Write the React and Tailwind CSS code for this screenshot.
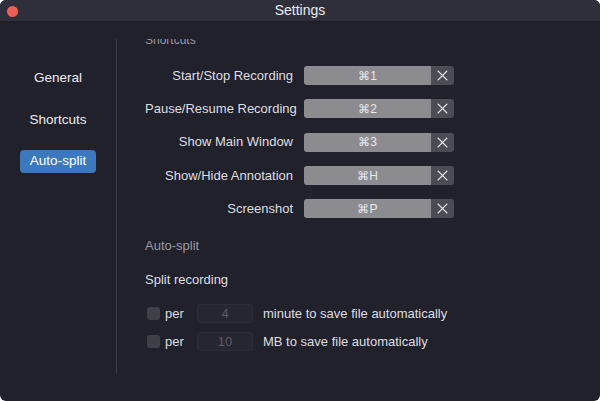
import React from 'react';

const shortcuts = [
  { label: 'Start/Stop Recording', keys: '⌘1' },
  { label: 'Pause/Resume Recording', keys: '⌘2' },
  { label: 'Show Main Window', keys: '⌘3' },
  { label: 'Show/Hide Annotation', keys: '⌘H' },
  { label: 'Screenshot', keys: '⌘P' },
];

const ShortcutRow = ({ label, keys }) => (
  <div className="flex items-center h-[33.3px]">
    <div className="w-[148px] whitespace-nowrap text-right text-[13px] text-[#dedee2]">{label}</div>
    <div className="ml-[11px] flex h-[19px]">
      <div className="w-[127px] flex items-center justify-center rounded-l-[3px] bg-[#8b8b90] text-[12px] text-[#e8e8ec]">
        {keys}
      </div>
      <button
        type="button"
        className="w-[23px] flex items-center justify-center rounded-r-[3px] bg-[#4c4c55] text-[#e8e8ec]"
      >
        <svg width="11" height="11" viewBox="0 0 10 10">
          <path d="M1 1L9 9M9 1L1 9" stroke="currentColor" strokeWidth="1.2" strokeLinecap="round" />
        </svg>
      </button>
    </div>
  </div>
);

const SplitRow = ({ value, text }) => (
  <div className="flex items-center h-[28px]">
    <div className="ml-[2px] w-[13px] h-[13px] rounded-[3px] bg-[#3f3f48]" />
    <span className="ml-[5px] w-[32px] text-[13px] text-[#dedee2]">per</span>
    <div className="w-[56px] h-[19px] flex items-center justify-center rounded-[3px] bg-[#262630] border border-[#2d2d37] text-[13px] text-[#5c5c66]">
      {value}
    </div>
    <span className="ml-[10px] whitespace-nowrap text-[13px] text-[#dedee2]">{text}</span>
  </div>
);

export default function App() {
  return (
    <div className="w-[600px] h-[401px] bg-white" style={{ fontFamily: '"Liberation Sans", Arial, sans-serif' }}>
      <div className="w-full h-full rounded-[6px] overflow-hidden bg-[#21212b] flex flex-col">
        {/* title bar */}
        <div className="relative h-[22px] bg-[#2f2f3b] border-b border-[#1c1c24] flex items-center justify-center">
          <span className="absolute left-[7px] top-[6px] w-[11px] h-[11px] rounded-full bg-[#ee5e55]" />
          <span className="text-[14px] text-[#ececf0]">Settings</span>
        </div>

        <div className="flex flex-1 pt-[17px] pb-[27px]">
          {/* sidebar */}
          <div className="w-[116px] flex flex-col items-center pt-[28px]">
            <div className="h-[22px] flex items-center text-[13.5px] text-[#ececf0]">General</div>
            <div className="mt-[20px] h-[22px] flex items-center text-[13.5px] text-[#ececf0]">Shortcuts</div>
            <div className="mt-[19px] h-[23px] px-[10px] flex items-center rounded-[4px] bg-[#3b78bd] text-[13.5px] text-white">
              Auto-split
            </div>
          </div>

          <div className="w-px bg-[#3a3a44]" />

          {/* settings pane */}
          <div className="flex-1 overflow-hidden pl-[28px]">
            <div className="-mt-[8px]">
              <div className="h-[17px] flex items-center text-[12px] text-[#9a9aa2]">Shortcuts</div>
              <div className="mt-[11px]">
                {shortcuts.map((s) => (
                  <ShortcutRow key={s.label} {...s} />
                ))}
              </div>
              <div className="mt-[12px] h-[17px] flex items-center text-[13px] text-[#9a9aa2]">Auto-split</div>
              <div className="mt-[17px] h-[17px] flex items-center text-[13px] text-[#dedee2]">Split recording</div>
              <div className="mt-[11px]">
                <SplitRow value="4" text="minute to save file automatically" />
                <SplitRow value="10" text="MB to save file automatically" />
              </div>
            </div>
          </div>
        </div>
      </div>
    </div>
  );
}
